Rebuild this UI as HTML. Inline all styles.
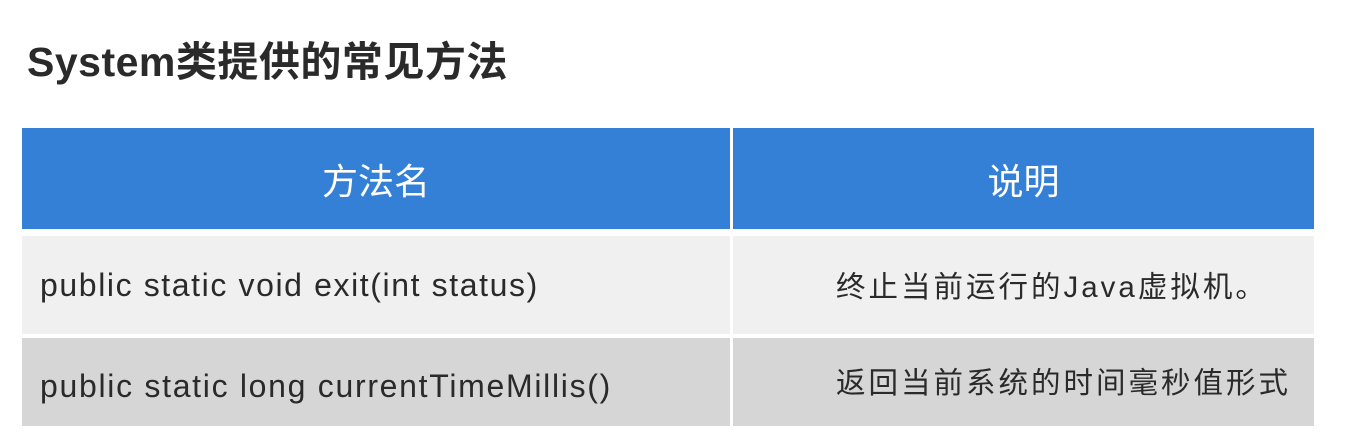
<!DOCTYPE html>
<html><head><meta charset="utf-8"><style>
body{margin:0;width:1361px;height:444px;background:#fff;overflow:hidden;position:relative;font-family:"Liberation Sans","Noto Sans CJK SC",sans-serif;}
.t{position:absolute;left:27px;top:28px;font-size:41px;font-weight:bold;color:#2a2a2a;letter-spacing:0.5px;white-space:nowrap;}
.c{position:absolute;box-sizing:border-box;display:flex;align-items:center;white-space:nowrap;}
.h{background:#3380d6;color:#fff;font-size:36px;justify-content:center;}
.r1{background:#f0f0f0;color:#2a2a2a;font-size:32px;letter-spacing:1.6px;}
.r2{background:#d6d6d6;color:#2a2a2a;font-size:32px;letter-spacing:1.7px;}
.z{font-size:29.5px;letter-spacing:3px;}
</style></head><body>
<div class="t">System类提供的常见方法</div>
<div class="c h" style="left:22px;top:128px;width:708px;height:101px;">方法名</div>
<div class="c h" style="left:733px;top:128px;width:581px;height:101px;">说明</div>
<div class="c r1" style="left:22px;top:236px;width:708px;height:98px;padding-left:18px;">public static void exit(int status)</div>
<div class="c r1 z" style="left:733px;top:236px;width:581px;height:98px;padding-left:103px;">终止当前运行的Java虚拟机。</div>
<div class="c r2" style="left:22px;top:338px;width:708px;height:88px;padding-left:18px;padding-top:8px;">public static long currentTimeMillis()</div>
<div class="c r2 z" style="left:733px;top:338px;width:581px;height:88px;padding-left:103px;padding-bottom:2px;">返回当前系统的时间毫秒值形式</div>
</body></html>
